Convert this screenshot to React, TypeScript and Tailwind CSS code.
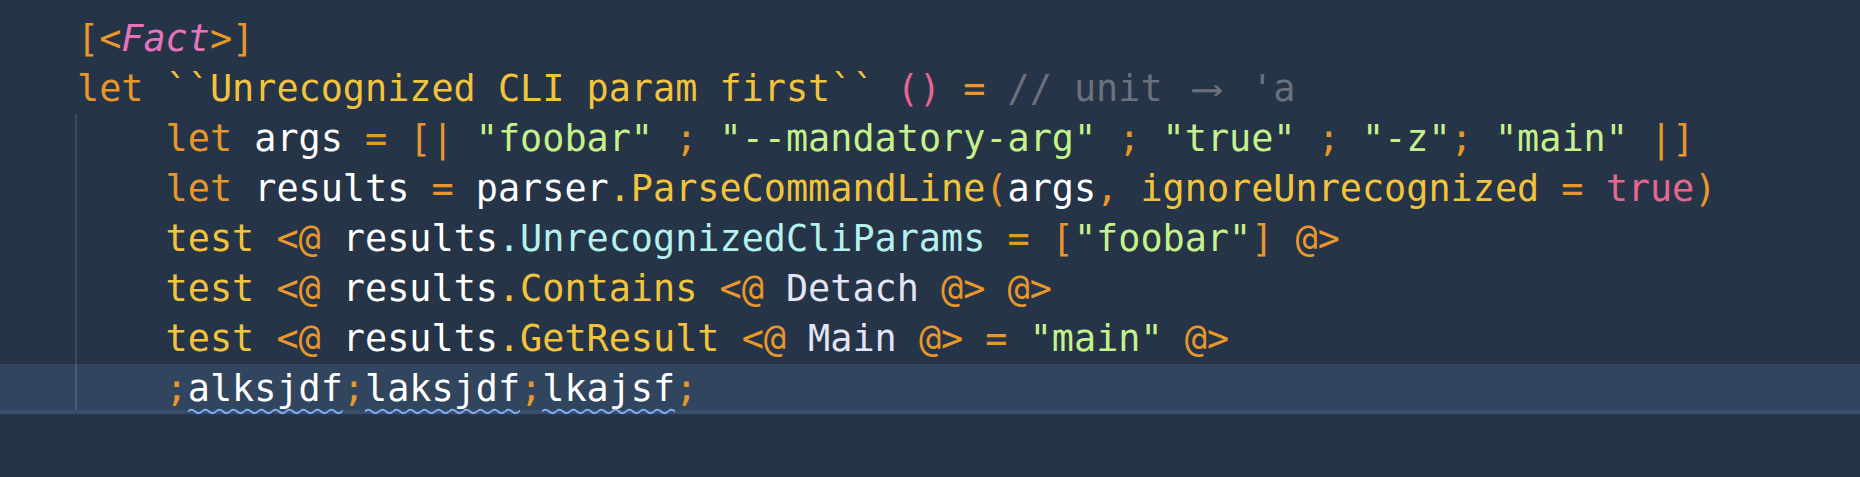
type Tok = [string, string] | [string, string, "sq" | "arrow" | "it"];

const O = "text-[#e8972b]";
const Y = "text-[#f2c43c]";
const W = "text-[#ffffff]";
const G = "text-[#c5f28a]";
const P = "text-[#e5678f]";
const K = "text-[#b6f1ee]";
const L = "text-[#e3e5f7]";
const M = "text-[#6a717c]";
const PK = "text-[#e574bd]";

const lines: { indent: boolean; active?: boolean; toks: Tok[] }[] = [
  { indent: false, toks: [[O, "[<"], [PK, "Fact", "it"], [O, ">]"]] },
  {
    indent: false,
    toks: [
      [O, "let "],
      [Y, "``Unrecognized CLI param first`` "],
      [P, "()"],
      [O, " = "],
      [M, "// unit "],
      [M, "->", "arrow"],
      [M, " 'a"],
    ],
  },
  {
    indent: true,
    toks: [
      [O, "    let "],
      [W, "args "],
      [O, "= [| "],
      [G, '"foobar"'],
      [O, " ; "],
      [G, '"--mandatory-arg"'],
      [O, " ; "],
      [G, '"true"'],
      [O, " ; "],
      [G, '"-z"'],
      [O, "; "],
      [G, '"main"'],
      [O, " |]"],
    ],
  },
  {
    indent: true,
    toks: [
      [O, "    let "],
      [W, "results "],
      [O, "= "],
      [W, "parser"],
      [Y, ".ParseCommandLine"],
      [O, "("],
      [W, "args"],
      [O, ", "],
      [Y, "ignoreUnrecognized "],
      [O, "= "],
      [P, "true"],
      [O, ")"],
    ],
  },
  {
    indent: true,
    toks: [
      [Y, "    test "],
      [O, "<@ "],
      [W, "results"],
      [K, ".UnrecognizedCliParams "],
      [O, "= ["],
      [G, '"foobar"'],
      [O, "] @>"],
    ],
  },
  {
    indent: true,
    toks: [
      [Y, "    test "],
      [O, "<@ "],
      [W, "results"],
      [Y, ".Contains "],
      [O, "<@ "],
      [L, "Detach "],
      [O, "@> @>"],
    ],
  },
  {
    indent: true,
    toks: [
      [Y, "    test "],
      [O, "<@ "],
      [W, "results"],
      [Y, ".GetResult "],
      [O, "<@ "],
      [L, "Main "],
      [O, "@> = "],
      [G, '"main"'],
      [O, " @>"],
    ],
  },
  {
    indent: true,
    active: true,
    toks: [
      [O, "    ;"],
      [W, "alksjdf", "sq"],
      [O, ";"],
      [W, "laksjdf", "sq"],
      [O, ";"],
      [W, "lkajsf", "sq"],
      [O, ";"],
    ],
  },
];

function Squiggle() {
  return (
    <svg className="absolute left-0 bottom-[-5px] h-[7px] w-full" preserveAspectRatio="none">
      <defs>
        <pattern id="sq" width="14" height="7" patternUnits="userSpaceOnUse">
          <path d="M0 3.5 Q3.5 0 7 3.5 T14 3.5" fill="none" stroke="#7eabf2" strokeWidth="2" />
        </pattern>
      </defs>
      <rect width="100%" height="100%" fill="url(#sq)" />
    </svg>
  );
}

function Token({ t }: { t: Tok }) {
  const [cls, text, kind] = t;
  if (kind === "arrow")
    return (
      <span className={`${cls} inline-block w-[2ch] overflow-visible text-center`}>
        <span className="inline-block scale-x-[1.15]">⟶</span>
      </span>
    );
  if (kind === "it") return <span className={`${cls} italic`}>{text}</span>;
  if (kind === "sq")
    return (
      <span className={`${cls} relative`}>
        {text}
        <Squiggle />
      </span>
    );
  return <span className={cls}>{text}</span>;
}

export default function App() {
  return (
    <div className="h-[477px] w-[1860px] overflow-hidden bg-[#253447] pt-[14px] font-['DejaVu_Sans_Mono',monospace] text-[36.8px] leading-[50px]">
      {lines.map((ln, i) => (
        <div
          key={i}
          className={
            ln.active
              ? "flex h-[50px] border-b-[4px] border-[#3a4e6a] bg-[#32455e]"
              : "flex h-[50px]"
          }
        >
          <div className="w-[76px] shrink-0" />
          <div
            className={
              ln.indent
                ? ln.active
                  ? "flex-1 whitespace-pre border-l-2 border-[#4a5d78] pl-0 -ml-px"
                  : "flex-1 whitespace-pre border-l-2 border-[#384a5f] pl-0 -ml-px"
                : "flex-1 whitespace-pre pl-px"
            }
          >
            {ln.toks.map((t, j) => (
              <Token key={j} t={t} />
            ))}
          </div>
        </div>
      ))}
    </div>
  );
}
